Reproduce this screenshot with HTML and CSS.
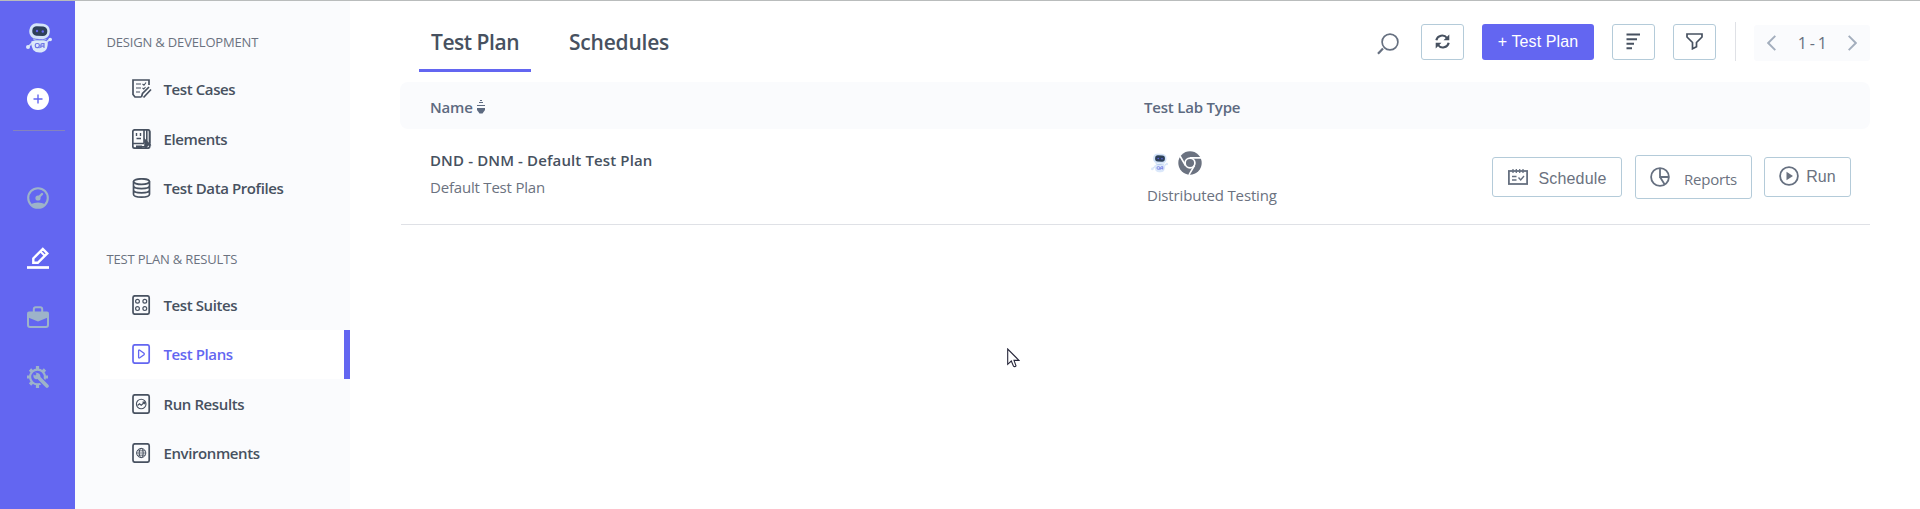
FILE: index.html
```html
<!DOCTYPE html>
<html lang="en">
<head>
<meta charset="utf-8">
<title>Test Plans</title>
<link rel="stylesheet" href="styles.css">
</head>
<body>
<svg class="defs" width="0" height="0" aria-hidden="true">
  <symbol id="robot" viewBox="0 0 26 30">
    <path d="M6 20 2.500 23.500M21 18.500 24 16.500" stroke="#cfdff5" stroke-width="1.600" fill="none"/>
    <circle cx="2" cy="24" r="2" fill="#dbe8fa"/><circle cx="24.200" cy="16.500" r="1.800" fill="#dbe8fa"/>
    <path d="M5.300 18.500Q13.500 15 21.700 18.500Q22.500 29.500 13.500 29.600Q4.800 29.500 5.300 18.500Z" fill="#dbe8fa"/>
    <path d="M7 15.500Q13.500 18.500 21 15.800L20 17Q13.500 19 7.500 17Z" fill="#a9c3e8"/>
    <rect x="3.300" y=".5" width="20.500" height="15.500" rx="7" fill="#d3e3f8" transform="rotate(3 13.500 8)"/>
    <rect x="6.300" y="3.300" width="15" height="9.600" rx="4.300" fill="#2d4059" transform="rotate(3 13.500 8)"/>
    <circle cx="11" cy="8" r="1.200" fill="#6366f1"/><circle cx="16.800" cy="8.500" r="1.200" fill="#6366f1"/>
    <g fill="none" stroke="#6f76e6" stroke-width="1.200"><rect x="9.300" y="20.500" width="4" height="4.200" rx="1.600"/><path d="M12.200 23.800 13.500 25.100M14.800 25V22.200Q14.800 20.600 16.300 20.600H18V25M14.800 23.200H18"/></g>
  </symbol>
</svg>
<div class="app">
  <nav class="rail">
    <svg class="logo" viewBox="0 0 26 30"><use href="#robot"/></svg>
    <svg class="add" viewBox="0 0 22 22"><circle cx="11" cy="11" r="11" fill="#fff"/><path d="M11 6.500v9M6.500 11h9" stroke="#6366f1" stroke-width="1.400"/></svg>
    <div class="rule"></div>
    <div class="rail-items">
      <svg viewBox="0 0 22 22"><circle cx="11" cy="11" r="9.800" fill="none" stroke="currentColor" stroke-width="2.100"/><path d="M3.500 17.200Q11 13.800 18.500 17.200Q16 21 11 21T3.500 17.200Z" fill="currentColor"/><circle cx="11" cy="11" r="2.600" fill="currentColor"/><path d="M11 11 15 7" stroke="currentColor" stroke-width="2.400" stroke-linecap="round"/></svg>
      <svg class="active" viewBox="0 0 22 22"><path d="M6.300 15.800V11.400L15.800 2 20.300 6.400 10.800 15.800Z" fill="none" stroke="currentColor" stroke-width="2.400"/><path d="M13.500 4.500 18 9" stroke="currentColor" stroke-width="2"/><path d="M0 20.500h22" stroke="currentColor" stroke-width="2.700"/></svg>
      <svg viewBox="0 0 22 22"><path d="M6.800 6V3.200Q6.800 1.200 8.800 1.200h4.400Q15.200 1.200 15.200 3.200V6" fill="none" stroke="currentColor" stroke-width="2"/><path d="M2 5.500H20Q22 5.500 22 7.500V11L11 15.500 0 11V7.500Q0 5.500 2 5.500Z" fill="currentColor"/><path d="M1 10V19Q1 21 3 21H19Q21 21 21 19V10" fill="none" stroke="currentColor" stroke-width="2"/></svg>
      <svg viewBox="0 0 22 22"><circle cx="10.500" cy="11" r="7.400" fill="none" stroke="currentColor" stroke-width="2.200"/><path d="M10.500 0V4M10.500 18V22M0 11H4M17 11H21M3 3.500 5.500 6M18 3.500 15.500 6M3 18.500 5.500 16" stroke="currentColor" stroke-width="3.200"/><path d="M11.500 11.500 20.500 20.500" stroke="#6366f1" stroke-width="6"/><path d="M10 10 20 20" stroke="currentColor" stroke-width="3.600" stroke-linecap="round"/><path d="M8.200 6.600 10.800 9.200 9.200 10.800 6.600 8.200Q5.600 12 8.800 13.300 12 13.500 13.400 11 13.800 7 8.200 6.600Z" fill="currentColor"/></svg>
    </div>
  </nav>

  <aside class="sidebar">
    <h2>DESIGN &amp; DEVELOPMENT</h2>
    <ul>
      <li><svg viewBox="0 0 20 20"><path d="M17 6V1H1V15.500L3 18H9.500" /><path d="M4 5h5M4 9h5M4 13h4M10.500 5l1.500 1.300L14 3.500M10.500 9l1.300 1L13.500 8" stroke-width="1.100"/><path d="M9.500 18 10.500 14.500 17 8M11.500 18.500 19 10.500" stroke-width="1.700"/></svg>Test Cases</li>
      <li><svg viewBox="0 0 20 20"><rect x=".8" y=".8" width="17" height="18.400" rx="2"/><path d="M12 1V14M1 14.500H12M7 17.800H14" stroke-width="1.600"/><path d="M4.500 4v3M8.500 4v3M4.500 9.500H9" stroke-width="1.400"/><path d="M14.800 1V13M17.500 2V14" stroke-width="1.600"/><path d="M12.200 9 19.500 16.300 16.200 16.700 13.800 20 12.200 17ZM4 16.500H10V19H4Z" fill="currentColor" stroke="none"/></svg>Elements</li>
      <li><svg viewBox="0 0 20 20"><ellipse cx="9.500" cy="3.600" rx="8" ry="2.800"/><path d="M1.500 3.600V16.200C1.500 20 17.500 20 17.500 16.200V3.600M1.500 7.800C1.500 11.500 17.500 11.500 17.500 7.800M1.500 12C1.500 15.700 17.500 15.700 17.500 12"/></svg>Test Data Profiles</li>
    </ul>
    <h2 class="second">TEST PLAN &amp; RESULTS</h2>
    <ul>
      <li><svg viewBox="0 0 20 20"><rect class="frame" x="1" y=".8" width="16.200" height="18.400" rx="2"/><g stroke-width="1.200"><circle cx="5.500" cy="6.200" r="1.900"/><circle cx="12.800" cy="6.200" r="1.900"/><circle cx="5.500" cy="13.600" r="1.900"/><circle cx="12.800" cy="13.600" r="1.900"/></g></svg>Test Suites</li>
      <li class="current"><svg viewBox="0 0 20 20"><rect class="frame" x="1" y=".8" width="16.200" height="18.400" rx="2"/><path d="M6.600 6.800Q6.600 5.500 7.800 6.200L12 9.300Q12.700 10 12 10.700L7.800 13.800Q6.600 14.500 6.600 13.200Z" stroke-width="1.300"/></svg>Test Plans</li>
      <li><svg viewBox="0 0 20 20"><rect class="frame" x="1" y=".8" width="16.200" height="18.400" rx="2"/><circle cx="9.200" cy="10" r="4.800" stroke-width="1.100"/><path d="M5.500 11.500 7.500 9.800 9.200 11.200 12.600 8.300M10.500 8.200H12.700V10.300" stroke-width="1.200"/></svg>Run Results</li>
      <li><svg viewBox="0 0 20 20"><rect class="frame" x="1" y=".8" width="16.200" height="18.400" rx="2"/><g stroke-width="1"><circle cx="9.200" cy="10" r="4.600"/><ellipse cx="9.200" cy="10" rx="2" ry="4.600"/><path d="M4.600 10h9.200M5.300 7.800h7.800M5.300 12.200h7.800" stroke-width=".8"/></g></svg>Environments</li>
    </ul>
  </aside>

  <main>
    <header>
      <div class="tabs"><a class="tab on">Test Plan</a><a class="tab second-tab">Schedules</a></div>
      <div class="tools">
        <svg class="search" width="22" height="22" viewBox="0 0 22 22"><circle cx="13" cy="9" r="7.900" stroke-width="1.700"/><path d="M6 15.500 1 20.800" stroke-width="2.200"/></svg>
        <button class="icon-btn refresh"><svg width="15" height="15" viewBox="0 0 15 15"><path d="M1.300 6.300A6 6 0 0 1 12 4M13.700 8.700A6 6 0 0 1 3 11" fill="none" stroke="#475160" stroke-width="2.100"/><path d="M14.300 .5V6.300H8.500ZM.7 14.500V8.700H6.500Z" fill="#475160"/></svg></button>
        <button class="primary">+ Test Plan</button>
        <button class="icon-btn sort"><svg width="15" height="17" viewBox="0 0 15 17"><path d="M.5 1.500H14M.5 6.300H11M.5 10.800H8M.5 15.300H6" stroke="#475160" stroke-width="1.900"/></svg></button>
        <button class="icon-btn filter"><svg width="17" height="17" viewBox="0 0 17 17"><path d="M1 1H16V4L10.500 9.500V13.800L6.500 15.800V9.500L1 4Z" fill="none" stroke="#475160" stroke-width="1.700"/></svg></button>
        <div class="divider"></div>
        <div class="pager"><svg width="9" height="16" viewBox="0 0 9 16"><path d="M8.300 .8 1.200 8 8.300 15.200"/></svg><span>1 - 1</span><svg width="9" height="16" viewBox="0 0 9 16"><path d="M.7 .8 7.800 8 .7 15.200"/></svg></div>
      </div>
    </header>

    <section class="table">
      <div class="thead">
        <div class="col-name">Name <svg width="8" height="14" viewBox="0 0 8 14"><path d="M3 .5H5M2 2.500H6M0 5.500H8" stroke="#5d6a80" stroke-width="1"/><path d="M0 8H8V10L5.500 13.500H2.500L0 10Z" fill="#5d6a80"/></svg></div>
        <div class="col-lab">Test Lab Type</div>
      </div>
      <div class="row">
        <div class="col-name"><div class="title">DND - DNM - Default Test Plan</div><div class="sub">Default Test Plan</div></div>
        <div class="col-lab">
          <div class="lab-icons">
            <svg width="17" height="20" viewBox="0 0 26 30"><use href="#robot"/></svg>
            <svg width="24" height="24" viewBox="0 0 24 24"><circle cx="12" cy="12" r="11.700" fill="#6b7280"/><circle cx="12" cy="12" r="4.900" fill="none" stroke="#fff" stroke-width="1.700"/><path d="M12 6.900H23.300M7.500 14.500 2 5M16.500 14.500 11 23.800" stroke="#fff" stroke-width="1.600"/></svg>
          </div>
          <div class="sub">Distributed Testing</div>
        </div>
        <div class="actions">
          <button class="act schedule"><svg width="20" height="16" viewBox="0 0 20 16"><rect x=".9" y="2" width="18.200" height="13"/><path d="M5 0V4M8.300 0V4M11.700 0V4M15 0V4" stroke-width="1.300"/><path d="M4 7.500H8.500M4 11H8.500M10.500 8.500 12.700 11 16 7" stroke-width="1.400"/></svg><span>Schedule</span></button>
          <button class="act reports"><svg width="20" height="20" viewBox="0 0 20 20"><circle cx="10" cy="10" r="8.900"/><path d="M10 1V10H19M10 10 14.700 17.500"/></svg><span>Reports</span></button>
          <button class="act run"><svg width="20" height="20" viewBox="0 0 20 20"><circle cx="10" cy="10" r="8.900"/><path d="M7.500 5.800 14 10 7.500 14.200Z" fill="currentColor" stroke="none"/></svg><span>Run</span></button>
        </div>
      </div>
    </section>
  </main>
</div>
<svg class="cursor" width="13" height="20" viewBox="0 0 13 20"><path d="M.7 1V16.300L4.300 13 6.500 18.200Q7.700 19.300 9 17.800L7 12.400H12Z" fill="#fff" stroke="#26263a" stroke-width="1.100"/></svg>
</body>
</html>
```
FILE: styles.css
```css
* { box-sizing: border-box; }
body { margin: 0; background: #fff; font-family: "Open Sans", "Noto Sans", sans-serif; color: #475160; overflow: hidden; }
.defs { position: absolute; }
svg { flex: none; display: block; }
h2, ul { margin: 0; padding: 0; list-style: none; }
button { margin: 0; padding: 0; background: #fff; border: 1px solid #b4cbd9; border-radius: 3px; display: flex; align-items: center; justify-content: center; }

.app { display: flex; height: 509px; border-top: 1px solid #b9bcbc; }

.rail { width: 75px; background: #6366f1; display: flex; flex-direction: column; align-items: center; padding-top: 22px; }
.logo { width: 26px; height: 30px; margin-left: 3px; }
.add { width: 22px; height: 22px; margin-top: 35px; }
.rule { width: 52px; height: 1px; margin: 20px 0 0 3px; background: #8583bd; }
.rail-items { margin-top: 56px; display: flex; flex-direction: column; gap: 37.700px; color: #9db3c9; }
.rail-items svg { width: 22px; height: 22px; }
.rail-items .active { color: #fff; }

.sidebar { width: 275px; background: #fafbfd; padding-top: 31px; }
h2 { margin-left: 31.500px; height: 20px; line-height: 20px; font-size: 13px; font-weight: 400; letter-spacing: -.170px; color: #6b7280; }
.sidebar ul { margin: 12.500px 0 0 25px; }
.second { margin-top: 36px; }
.sidebar .second + ul { margin-top: 11px; }
li { height: 49.500px; display: flex; align-items: center; gap: 11.500px; padding-left: 32px; font-size: 15px; font-weight: 600; letter-spacing: -.400px; }
li svg { width: 20px; height: 20px; fill: none; stroke: currentColor; stroke-width: 1.700; }
.current { background: #fff; color: #6366f1; border-right: 6px solid #6366f1; }

main { flex: 1; padding: 0 50px; }
header { height: 81px; display: flex; justify-content: space-between; }
.tabs { display: flex; padding-left: 19px; }
.tab { height: 71px; padding: 24px 0 0 12px; line-height: 34px; font-size: 21px; font-weight: 600; letter-spacing: -.470px; white-space: nowrap; border-bottom: 3px solid transparent; }
.on { width: 112px; border-color: #6366f1; }
.second-tab { padding-left: 38px; letter-spacing: -.220px; }
.tools { display: flex; align-items: flex-start; padding-top: 23px; }
.search { margin: 9px 22px 0 0; fill: none; stroke: #667080; }
.icon-btn { width: 43px; height: 36px; }
.icon-btn svg { margin-top: -1px; }
.primary { width: 112px; height: 36px; margin: 0 18px; background: #6366f1; border: 0; color: #fff; font: 16px "Liberation Sans", Arial, sans-serif; letter-spacing: .120px; padding-bottom: 1px; }
.sort { margin-right: 18px; }
.divider { width: 1px; height: 39px; margin: -2px 18px 0 19px; background: #dfe1e6; }
.pager { width: 116px; height: 36px; margin-top: 1px; border-radius: 3px; background: #fafbfd; display: flex; align-items: center; justify-content: space-between; padding: 0 13px 0 13px; font-size: 16px; letter-spacing: -.700px; color: #667080; }
.pager svg { fill: none; stroke: #a3aebd; stroke-width: 1.900; }

.thead { height: 47px; display: flex; align-items: center; padding: 2px 0 0 30px; border-radius: 8px; background: #fafbfd; font-size: 15px; font-weight: 600; letter-spacing: -.200px; color: #5d6a80; }
.col-name { width: 714px; flex: none; }
.thead .col-name { display: flex; align-items: center; gap: 4px; }
.row { height: 96px; margin-left: 1px; padding-left: 29px; display: flex; border-bottom: 1px solid #dfe1e6; }
.title { margin-top: 19px; height: 24px; line-height: 24px; font-size: 15px; font-weight: 600; letter-spacing: .130px; }
.sub { height: 24px; line-height: 24px; margin-top: 3px; font-size: 15px; letter-spacing: -.200px; color: #6b7280; }
.col-lab { flex: 1; }
.row .col-lab { padding-left: 3px; }
.lab-icons { display: flex; align-items: center; gap: 10px; padding-left: 4px; height: 24px; margin-top: 22px; }
.row .col-lab .sub { margin-top: 8px; letter-spacing: -.150px; }
.actions { display: flex; align-items: flex-start; padding: 26px 19px 0 0; }
.act { border-radius: 3px; color: #6b7280; font: 16px "Liberation Sans", Arial, sans-serif; }
.act svg { fill: none; stroke: #667080; stroke-width: 1.800; }
.schedule { width: 130px; height: 40px; gap: 11px; margin-top: 2px; letter-spacing: .150px; }
.schedule span { margin-top: 3px; }
.reports { width: 117px; height: 44px; gap: 14px; margin: 0 12px 0 13px; font: 15px "Open Sans", sans-serif; letter-spacing: -.200px; }
.reports span { margin-top: 3px; }
.run { width: 87px; height: 40px; gap: 7px; margin-top: 2px; padding-bottom: 3px; }
.run span { margin-top: 3px; }

.cursor { position: absolute; left: 1007px; top: 348px; }
```
